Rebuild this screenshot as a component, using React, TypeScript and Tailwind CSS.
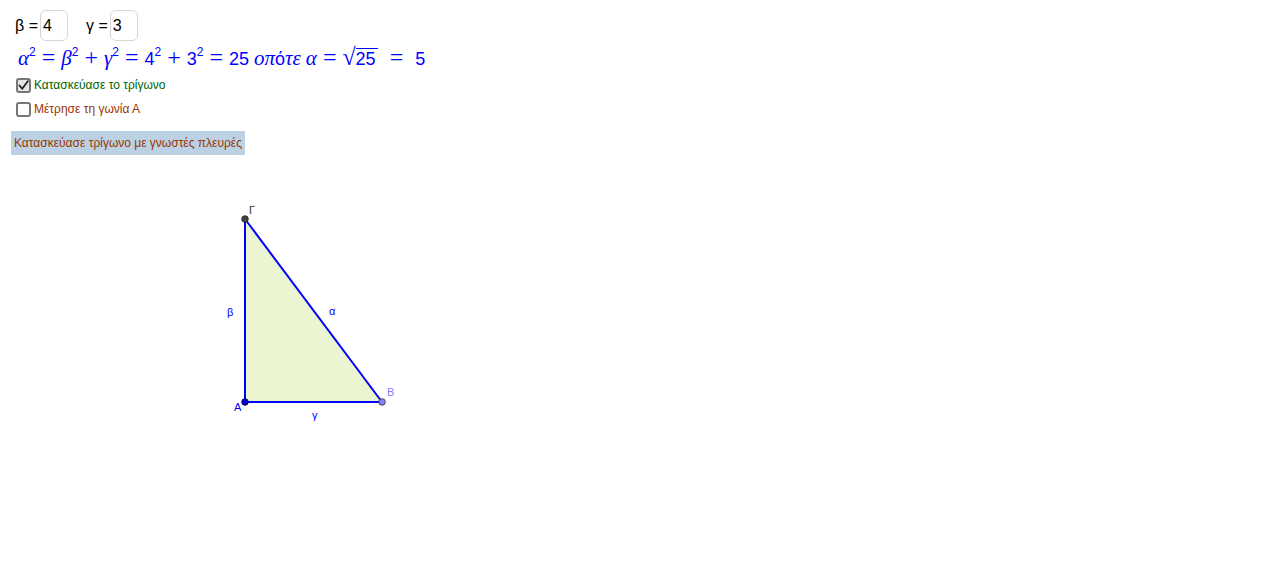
import React from 'react'

function Sup({ children }: { children: React.ReactNode }) {
  return <span className="relative -top-[9px] text-[12px] font-['Liberation_Sans',sans-serif] not-italic">{children}</span>
}

function Var({ children }: { children: React.ReactNode }) {
  return <span className="italic font-['Liberation_Serif',serif] text-[21px]">{children}</span>
}

function Op({ children }: { children: React.ReactNode }) {
  return <span className="mx-[6px] font-['Liberation_Serif',serif] text-[24px]">{children}</span>
}

function Checkbox({ checked }: { checked: boolean }) {
  return (
    <span className={`flex h-[15px] w-[15px] items-center justify-center rounded-[3px] border-2 border-[#777] ${checked ? 'bg-[#e6e6e6]' : 'bg-white'}`}>
      {checked && (
        <svg width="11" height="11" viewBox="0 0 11 11">
          <path d="M1.5 5.5 L4.2 8.8 L9.8 1.2" fill="none" stroke="#222" strokeWidth="1.8" strokeLinecap="round" strokeLinejoin="round" />
        </svg>
      )}
    </span>
  )
}

export default function App() {
  return (
    <div className="relative h-[588px] w-[1278px] overflow-hidden bg-white font-['Liberation_Sans',sans-serif]">
      {/* controls */}
      <div className="relative z-10 flex flex-col items-start pt-[10px]">
        <div className="ml-[15px] flex items-center text-[16px] text-black">
          <span className="mr-[2px]">β =</span>
          <span className="flex h-[31px] w-[28px] items-center rounded-[6px] border border-[#d6d6d6] pl-[2px]">4</span>
          <span className="ml-[18px] mr-[2px]">γ =</span>
          <span className="flex h-[31px] w-[28px] items-center rounded-[6px] border border-[#d6d6d6] pl-[2px]">3</span>
        </div>

        <div className="ml-[18px] mt-[3px] flex h-[26px] items-baseline whitespace-nowrap text-[18px] leading-[26px] text-[#0000ff]">
          <Var>α</Var><Sup>2</Sup>
          <Op>=</Op>
          <Var>β</Var><Sup>2</Sup>
          <Op>+</Op>
          <Var>γ</Var><Sup>2</Sup>
          <Op>=</Op>
          <span>4</span><Sup>2</Sup>
          <Op>+</Op>
          <span>3</span><Sup>2</Sup>
          <Op>=</Op>
          <span>25</span>
          <span className="ml-[5px] italic font-['Liberation_Serif',serif] text-[21px]">οπ<span className="not-italic font-['Liberation_Sans',sans-serif] text-[18px]">ό</span>τε</span>
          <span className="ml-[5px]"><Var>α</Var></span>
          <Op>=</Op>
          <span className="font-['Liberation_Serif',serif] text-[24px]">√</span>
          <span className="border-t border-[#0000ff] pr-[2px] leading-[20px]">25</span>
          <span className="mx-[12px] font-['Liberation_Serif',serif] text-[24px]">=</span>
          <span>5</span>
        </div>

        <div className="ml-[16px] mt-[6px] flex items-center gap-[3px] text-[12px] text-[#006400]">
          <Checkbox checked />
          <span>Κατασκεύασε το τρίγωνο</span>
        </div>
        <div className="ml-[16px] mt-[6px] flex items-center gap-[3px] text-[12px] text-[#993300]">
          <Checkbox checked={false} />
          <span>Μέτρησε τη γωνία Α</span>
        </div>

        <div className="ml-[11px] mt-[13px] flex h-[24px] w-[234px] items-center bg-[#bcd2e4] pl-[3px] text-[12px] text-[#993300]">
          Κατασκεύασε τρίγωνο με γνωστές πλευρές
        </div>
      </div>

      {/* drawing canvas */}
      <svg className="absolute inset-0" width="1278" height="588" viewBox="0 0 1278 588">
        <polygon points="245,219 245,402 382,402" fill="#ebf5d1" />
        <line x1="245" y1="219" x2="245" y2="402" stroke="#0000ff" strokeWidth="2" />
        <line x1="245" y1="402" x2="382" y2="402" stroke="#0000ff" strokeWidth="2" />
        <line x1="245" y1="219" x2="382" y2="402" stroke="#0000ff" strokeWidth="2" />
        <circle cx="245" cy="219" r="3.3" fill="#444" stroke="#222" strokeWidth="0.8" />
        <circle cx="245" cy="402" r="3.3" fill="#0000cc" stroke="#000066" strokeWidth="0.8" />
        <circle cx="382" cy="402" r="3.3" fill="#8080ff" stroke="#333" strokeWidth="0.8" />
        <g fontFamily="'Liberation Sans', sans-serif" fontSize="11">
          <text x="249" y="214" fill="#333">Γ</text>
          <text x="227" y="316" fill="#0000ff">β</text>
          <text x="329" y="315" fill="#0000ff">α</text>
          <text x="234" y="411" fill="#0000ff">A</text>
          <text x="312" y="419" fill="#0000ff">γ</text>
          <text x="387" y="396" fill="#7f7fff">B</text>
        </g>
      </svg>
    </div>
  )
}
